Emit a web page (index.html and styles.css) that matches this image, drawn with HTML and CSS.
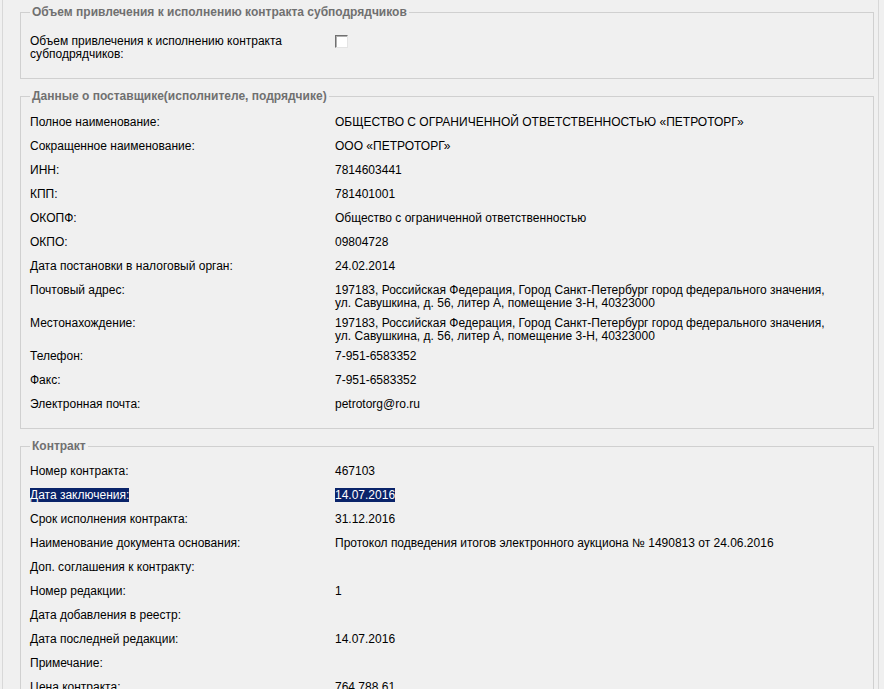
FILE: index.html
```html
<!DOCTYPE html>
<html lang="ru">
<head>
  <meta charset="UTF-8" />
  <title>Сведения о контракте</title>
  <link rel="stylesheet" href="styles.css">
</head>
<body>

  <div class="page">
    <!-- Субподрядчики -->
    <fieldset class="group group-first">
      <legend>Объем привлечения к исполнению контракта субподрядчиков</legend>
      <div class="row">
        <div class="label">Объем привлечения к исполнению контракта<br>субподрядчиков:</div>
        <div class="value"><span class="checkbox"></span></div>
      </div>
    </fieldset>

    <!-- Поставщик -->
    <fieldset class="group group-supplier">
      <legend>Данные о поставщике(исполнителе, подрядчике)</legend>
      <div class="row">
        <div class="label">Полное наименование:</div>
        <div class="value">ОБЩЕСТВО С ОГРАНИЧЕННОЙ ОТВЕТСТВЕННОСТЬЮ «ПЕТРОТОРГ»</div>
      </div>
      <div class="row">
        <div class="label">Сокращенное наименование:</div>
        <div class="value">ООО «ПЕТРОТОРГ»</div>
      </div>
      <div class="row">
        <div class="label">ИНН:</div>
        <div class="value">7814603441</div>
      </div>
      <div class="row">
        <div class="label">КПП:</div>
        <div class="value">781401001</div>
      </div>
      <div class="row">
        <div class="label">ОКОПФ:</div>
        <div class="value">Общество с ограниченной ответственностью</div>
      </div>
      <div class="row">
        <div class="label">ОКПО:</div>
        <div class="value">09804728</div>
      </div>
      <div class="row">
        <div class="label">Дата постановки в налоговый орган:</div>
        <div class="value">24.02.2014</div>
      </div>
      <div class="row">
        <div class="label">Почтовый адрес:</div>
        <div class="value">197183, Российская Федерация, Город Санкт-Петербург город федерального значения,<br>ул. Савушкина, д. 56, литер А, помещение 3-Н, 40323000</div>
      </div>
      <div class="row">
        <div class="label">Местонахождение:</div>
        <div class="value">197183, Российская Федерация, Город Санкт-Петербург город федерального значения,<br>ул. Савушкина, д. 56, литер А, помещение 3-Н, 40323000</div>
      </div>
      <div class="row">
        <div class="label">Телефон:</div>
        <div class="value">7-951-6583352</div>
      </div>
      <div class="row">
        <div class="label">Факс:</div>
        <div class="value">7-951-6583352</div>
      </div>
      <div class="row">
        <div class="label">Электронная почта:</div>
        <div class="value">petrotorg@ro.ru</div>
      </div>
    </fieldset>

    <!-- Контракт -->
    <fieldset class="group group-contract">
      <legend>Контракт</legend>
      <div class="row">
        <div class="label">Номер контракта:</div>
        <div class="value">467103</div>
      </div>
      <div class="row">
        <div class="label"><span class="selected">Дата заключения:</span></div>
        <div class="value"><span class="selected">14.07.2016</span></div>
      </div>
      <div class="row">
        <div class="label">Срок исполнения контракта:</div>
        <div class="value">31.12.2016</div>
      </div>
      <div class="row">
        <div class="label">Наименование документа основания:</div>
        <div class="value">Протокол подведения итогов электронного аукциона № 1490813 от 24.06.2016</div>
      </div>
      <div class="row">
        <div class="label">Доп. соглашения к контракту:</div>
        <div class="value"></div>
      </div>
      <div class="row">
        <div class="label">Номер редакции:</div>
        <div class="value">1</div>
      </div>
      <div class="row">
        <div class="label">Дата добавления в реестр:</div>
        <div class="value"></div>
      </div>
      <div class="row">
        <div class="label">Дата последней редакции:</div>
        <div class="value">14.07.2016</div>
      </div>
      <div class="row">
        <div class="label">Примечание:</div>
        <div class="value"></div>
      </div>
      <div class="row">
        <div class="label">Цена контракта:</div>
        <div class="value">764 788.61</div>
      </div>
    </fieldset>
  </div>

</body>
</html>
```

FILE: styles.css
```css
* {
  box-sizing: border-box;
}

body {
  background-color: #f0f0f0;
  font-family: "Liberation Sans", Arial, sans-serif;
  font-size: 12px;
  color: #000;
  margin: 0;
}

.page {
  margin-left: 2px;
  width: 877px;
  min-height: 100vh;
  border-left: 1px solid #d8d8d8;
  border-right: 1px solid #d8d8d8;
  padding: 6px 4px 0 17px;
}

.group {
  border: 1px solid #d0d0d0;
  margin: 0 0 11px;
  padding: 9px 9px 14px;
  min-width: 0;
}

.group-first {
  padding-top: 12px;
}

.group-supplier {
  padding-bottom: 10px;
}

.group-contract {
  padding-top: 8px;
}

legend {
  font-size: 12px;
  font-weight: bold;
  line-height: 13px;
  color: #707070;
  padding: 0 2px;
  margin-left: 0;
}

.row {
  display: flex;
  min-height: 24px;
  padding: 4px 0 3px;
  line-height: 13px;
}

.label {
  width: 305px;
  flex-shrink: 0;
}

.value {
  flex: 1;
}

.selected {
  background-color: #0a246a;
  color: #fff;
}

.checkbox {
  display: inline-block;
  width: 13px;
  height: 13px;
  background-color: #fff;
  border: 1px solid;
  border-color: #707070 #e4e4e4 #e4e4e4 #707070;
  box-shadow: inset 1px 1px 0 #b0b0b0;
}
```
